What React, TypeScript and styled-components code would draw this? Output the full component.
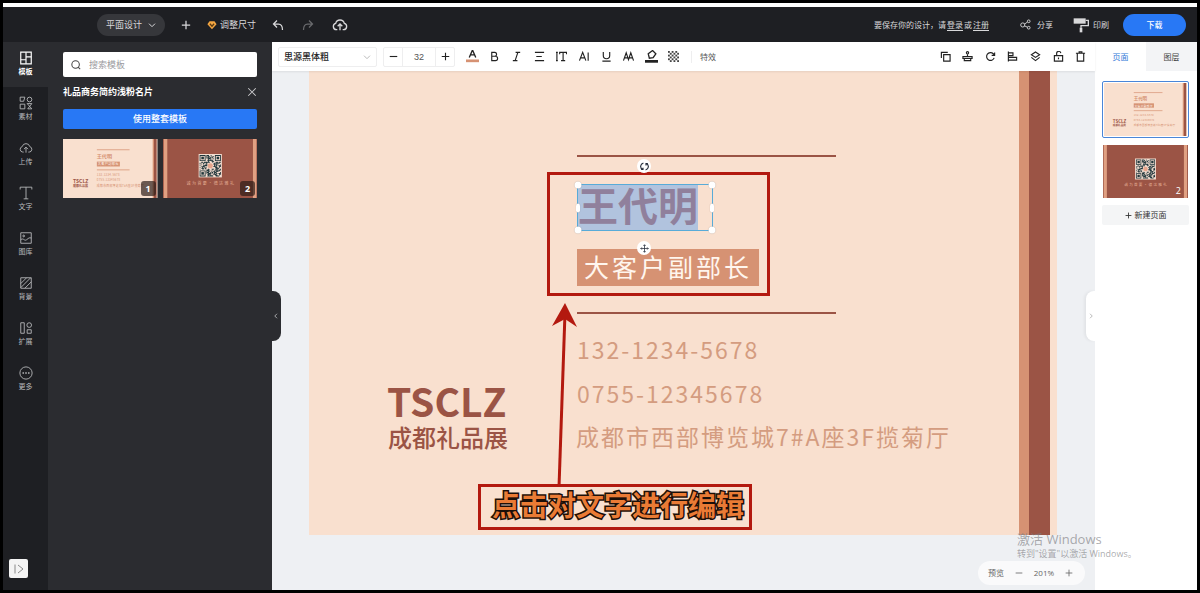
import React from "react";
import styled, { createGlobalStyle, css } from "styled-components";

const PEACH = "#f9e0cf";
const CLAY = "#d69273";
const BRICK = "#9b5445";
const MARK_RED = "#b3190f";

const GlobalStyle = createGlobalStyle`
  *, *::before, *::after { box-sizing: border-box; }
  body { margin: 0; background: #000; }
  body, button, input, select {
    font-family: "Open Sans", "Noto Sans CJK SC", sans-serif;
    font-size: 9px;
    line-height: 12px;
  }
  button, input, select { margin: 0; padding: 0; border: 0; background: none; color: inherit; }
  button { cursor: pointer; }
  svg { display: block; flex: none; }
`;

/* ---------- icons ---------- */

type IconProps = { size?: number; stroke?: number; children: React.ReactNode };

const Icon = ({ size = 12, stroke = 2, children }: IconProps) => (
  <svg
    width={size}
    height={size}
    viewBox="0 0 24 24"
    fill="none"
    stroke="currentColor"
    strokeWidth={stroke}
    aria-hidden="true"
  >
    {children}
  </svg>
);

const cloudUp = (
  <>
    <path d="M8 19H6.500A4.800 4.800 0 0 1 5.500 9.600A6.700 6.700 0 0 1 18.500 9.600A4.800 4.800 0 0 1 17.500 19H16" />
    <path d="M12 20V11M8.500 14L12 10.500L15.500 14" />
  </>
);

const icons = {
  plus: <path d="M12 2V22M2 12H22" />,
  minus: <path d="M2 12H22" />,
  down: <path d="M3 8L12 17L21 8" />,
  left: <path d="M16 3L7 12L16 21" />,
  right: <path d="M8 3L17 12L8 21" />,
  close: <path d="M3 3L21 21M21 3L3 21" />,
  undo: <path d="M10 3L3 10L10 17M3 10H13C18 10 21 14 21 22" />,
  redo: <path d="M14 3L21 10L14 17M21 10H11C6 10 3 14 3 22" />,
  cloud: cloudUp,
  search: (
    <>
      <circle cx="11" cy="11" r="9" />
      <path d="M17 17L22 22" />
    </>
  ),
  gem: (
    <>
      <path d="M6 3H18L23 10L12 22L1 10Z" fill="#f5a742" stroke="none" />
      <path d="M7 9L12 15L17 9" stroke="#5b3a12" strokeWidth="3" />
    </>
  ),
  share: (
    <>
      <circle cx="6" cy="13" r="4.500" />
      <circle cx="19" cy="5" r="3" />
      <circle cx="19" cy="19" r="3" />
      <path d="M10 11L16.500 6.500M10 15L16.500 18" />
    </>
  ),
  roller: (
    <>
      <path d="M1 2H19V10H1Z" fill="currentColor" stroke="none" />
      <path d="M19 5H23V13H12V16" />
      <path d="M10 16H14V23H10Z" fill="currentColor" stroke="none" />
    </>
  ),
  template: (
    <>
      <path d="M3 2H21V22H3Z" />
      <path d="M12 2V22M12 10H21M3 15H12" />
    </>
  ),
  shapes: (
    <>
      <path d="M2 2H10L8 9H2Z" />
      <circle cx="18" cy="6" r="4" />
      <path d="M2 14H10V22H2Z" />
      <path d="M14 13H22L15 22H22Z" />
    </>
  ),
  type: <path d="M2 6V2H22V6M12 2V22M8 22H16" />,
  gallery: (
    <>
      <path d="M3 3H21V21H3Z" />
      <circle cx="8" cy="8.500" r="1.500" />
      <path d="M3 15C8 11 9 18 13 15S17 11 21 12" />
    </>
  ),
  hatch: (
    <>
      <path d="M3 3H21V21H3Z" />
      <path d="M3 13L13 3M3 20L20 3M10 21L21 10" />
    </>
  ),
  extend: (
    <>
      <path d="M3 3H9V21H3Z" />
      <circle cx="17.500" cy="7" r="4" />
      <path d="M14 15H21V21H14Z" />
    </>
  ),
  more: (
    <>
      <circle cx="12" cy="12" r="10.500" />
      <path d="M6 12H8.500M10.700 12H13.300M15.500 12H18" strokeWidth="2.500" />
    </>
  ),
  expand: <path d="M4 3V21M10 4L20 12L10 20" />,
  fontColor: (
    <>
      <path d="M6 14L12 0L18 14M8 9H16" />
      <path d="M-1 20H25" stroke={CLAY} strokeWidth="5" />
    </>
  ),
  bold: <path d="M6 3H13A4.300 4.300 0 0 1 13 11.500H6ZM6 11.500H14A4.700 4.700 0 0 1 14 21H6Z" />,
  italic: <path d="M10 3H20M4 21H14M15 3L9 21" />,
  align: <path d="M2 3H22M5 12H17M2 21H22" />,
  spacing: <path d="M2 3V21M0 3H4M0 21H4M8 7V3H23V7M15.500 3V21M11 21H20" />,
  letterA: <path d="M1 21L8 3L15 21M4 15H12M20 3V21" />,
  underline: <path d="M5 2V10A7 7 0 0 0 19 10V2M3 22H21" />,
  caseAA: <path d="M1 21L7 4L12 19L17 4L23 21M3 15H10M14 15H21" />,
  marker: (
    <>
      <path d="M8 15L6 7L14 1L20 7L15 14Z" />
      <path d="M0 21H24" strokeWidth="5" />
    </>
  ),
  copy: (
    <>
      <path d="M8 8H22V22H8Z" />
      <path d="M3 15V3H17" />
    </>
  ),
  stamp: (
    <>
      <circle cx="12" cy="4" r="2.500" />
      <path d="M12 7V12M2 12H22V16H2ZM5 16V21H19V16" />
    </>
  ),
  rotate: <path d="M20 15A8.500 8.500 0 1 1 18 6L21 9M21 3V9.500H14.500" />,
  alignLeft: <path d="M3 1V23M3 4H13V10H3M3 14H21V20H3" />,
  layers: <path d="M12 2L21 8L12 14L3 8ZM3 14L12 21L21 14" />,
  lock: <path d="M3 10H21V22H3ZM8 10V6A4.500 4.500 0 0 1 17 4.500M12 14V18" />,
  trash: <path d="M2 5H22M5 5V22H19V5M9 5V2H15V5" />,
  spin: (
    <path d="M9 3A9 9 0 0 0 7 20M15 21A9 9 0 0 0 17 4M3 20H8V15M21 4H16V9" />
  ),
  move: (
    <path d="M12 2V22M2 12H22M9 5L12 2L15 5M9 19L12 22L15 19M5 9L2 12L5 15M19 9L22 12L19 15" />
  ),
};

type IconName = keyof typeof icons;

const checkCells = Array.from({ length: 36 }, (_, i) => [i % 6, Math.floor(i / 6)]).filter(
  ([x, y]) => (x + y) % 2 === 0
);

const CheckerIcon = () => (
  <svg width="11" height="11" viewBox="0 0 12 12" fill="#444" aria-hidden="true">
    {checkCells.map(([x, y]) => (
      <rect key={`${x}-${y}`} x={x * 2} y={y * 2} width="2" height="2" />
    ))}
  </svg>
);

/* ---------- frame and header ---------- */

const Frame = styled.div`
  display: flex;
  min-height: 100vh;
  padding: 3px;
  background: #000;
`;

const Window = styled.div`
  flex: 1;
  min-width: 0;
  display: flex;
  flex-direction: column;
  border-top: 4px solid #fff;
`;

const Header = styled.header`
  display: flex;
  align-items: center;
  justify-content: space-between;
  height: 35px;
  padding: 0 11px 0 94px;
  background: #1e1f23;
  color: #d8d8da;
`;

const HeaderGroup = styled.div<{ $gap: number }>`
  display: flex;
  align-items: center;
  gap: ${(p) => p.$gap}px;
  white-space: nowrap;
`;

const ModePill = styled.button`
  display: flex;
  align-items: center;
  justify-content: center;
  gap: 6px;
  width: 68px;
  height: 22px;
  border-radius: 11px;
  background: #36373b;
`;

const HeaderButton = styled.button<{ $gap?: number; $dim?: boolean }>`
  display: flex;
  align-items: center;
  gap: ${(p) => p.$gap ?? 0}px;
  opacity: ${(p) => (p.$dim ? 0.4 : 1)};
  font-size: ${(p) => (p.$gap && p.$gap > 3 ? 8 : 9)}px;
`;

const SaveHint = styled.p`
  margin: 0 10px 0 0;
  font-size: 8px;
`;

const HintLink = styled.a`
  margin: 0 1px;
  color: inherit;
  text-underline-offset: 2px;
`;

const DownloadButton = styled.button`
  width: 63px;
  height: 22px;
  border-radius: 11px;
  background: #2878f5;
  color: #fff;
  font-size: 8px;
  font-weight: 500;
`;

const Body = styled.div`
  flex: 1;
  display: flex;
`;

/* ---------- left side ---------- */

const Rail = styled.nav`
  display: flex;
  flex-direction: column;
  width: 45px;
  background: #1e1f23;
`;

const RailButton = styled.button<{ $active?: boolean }>`
  display: flex;
  flex-direction: column;
  align-items: center;
  gap: 2px;
  height: 45px;
  padding-top: 9px;
  font-size: 7px;
  line-height: 10px;
  color: ${(p) => (p.$active ? "#fff" : "#b9babd")};
  font-weight: ${(p) => (p.$active ? 700 : 400)};
  background: ${(p) => (p.$active ? "#2b2c30" : "transparent")};
`;

const ExpandButton = styled.button`
  display: grid;
  place-items: center;
  width: 19px;
  height: 19px;
  margin: auto 0 12px 6px;
  border-radius: 2px;
  background: #f4f4f4;
  color: #666;
`;

const TemplatePanel = styled.aside`
  position: relative;
  z-index: 1;
  width: 224px;
  padding: 10px 15px;
  background: #2b2c30;
`;

const SearchBox = styled.label`
  display: flex;
  align-items: center;
  gap: 8px;
  height: 25px;
  padding: 0 8px;
  border-radius: 2px;
  background: #fff;
  color: #444;
`;

const SearchInput = styled.input`
  flex: 1;
  min-width: 0;
  outline: none;
  &::placeholder { color: #9a9a9e; opacity: 1; }
`;

const PanelHead = styled.div`
  display: flex;
  align-items: center;
  justify-content: space-between;
  height: 32px;
  padding-bottom: 2px;
  color: #c9c9cb;
`;

const PanelTitle = styled.h2`
  margin: 0;
  color: #fff;
  font-size: 9px;
  font-weight: 700;
`;

const ApplyButton = styled.button`
  width: 100%;
  height: 20px;
  border-radius: 2px;
  background: #2878f5;
  color: #fff;
  font-weight: 500;
`;

const TemplateGrid = styled.div`
  display: grid;
  grid-template-columns: 1fr 1fr;
  gap: 5px;
  margin-top: 10px;
`;

const TemplateThumb = styled.button`
  position: relative;
  height: 59px;
  overflow: hidden;
`;

const PageBadge = styled.span`
  position: absolute;
  right: 2px;
  bottom: 2px;
  width: 15px;
  height: 15px;
  border-radius: 3px;
  background: rgba(40, 25, 20, 0.68);
  color: #fff;
  font: 700 9px/15px "Open Sans", sans-serif;
`;

const SideHandle = styled.button<{ $side: "left" | "right" }>`
  position: absolute;
  top: 50%;
  z-index: 2;
  display: grid;
  place-items: center;
  width: 10px;
  height: 50px;
  transform: translateY(-50%);
  ${(p) =>
    p.$side === "left"
      ? css`
          left: 100%;
          margin-left: -1px;
          border-radius: 0 8px 8px 0;
          background: #2b2c30;
          color: #d0d0d2;
        `
      : css`
          right: 100%;
          margin-right: -1px;
          border-radius: 8px 0 0 8px;
          background: #fff;
          color: #777;
          box-shadow: -2px 0 3px rgba(0, 0, 0, 0.05);
        `}
`;

/* ---------- editor ---------- */

const Editor = styled.main`
  position: relative;
  flex: 1;
  min-width: 0;
  display: flex;
  flex-direction: column;
  background: #eef0f3;
`;

const Toolbar = styled.div`
  display: flex;
  align-items: center;
  height: 29px;
  padding: 0 3px 0 6px;
  background: #fff;
  box-shadow: 0 1px 2px rgba(0, 0, 0, 0.08);
  color: #222;
  z-index: 1;
`;

const FontPicker = styled.div`
  position: relative;
  width: 99px;
  height: 20px;
  border: 1px solid #eeeeef;
  border-radius: 2px;
`;

const FontSelect = styled.select`
  width: 100%;
  height: 18px;
  padding-left: 5px;
  appearance: none;
  font-weight: 500;
`;

const PickerArrow = styled.span`
  position: absolute;
  top: 5px;
  right: 5px;
  color: #999;
  pointer-events: none;
`;

const Stepper = styled.div`
  display: grid;
  grid-template-columns: 18px 34px 18px;
  height: 20px;
  margin: 0 6px 0 6px;
  border: 1px solid #eeeeef;
  border-radius: 2px;
`;

const StepButton = styled.button`
  display: grid;
  place-items: center;
`;

const SizeInput = styled.input`
  width: 34px;
  border: solid #eeeeef;
  border-width: 0 1px;
  color: #555;
  font-family: "Liberation Sans", sans-serif;
  text-align: center;
`;

const ToolStrip = styled.div<{ $count: number; $width: number }>`
  display: grid;
  grid-template-columns: repeat(${(p) => p.$count}, 1fr);
  width: ${(p) => p.$width}px;
`;

const ToolButton = styled.button`
  display: grid;
  place-items: center;
  height: 20px;
`;

const EffectButton = styled.button`
  margin: 0 auto 0 6px;
  padding-left: 8px;
  border-left: 1px solid #eeeeef;
  color: #555;
  font-size: 8px;
`;

const Workspace = styled.div`
  flex: 1;
  display: flex;
  padding: 0 38px 55px 37px;
`;

const Card = styled.section`
  position: relative;
  flex: 1;
  min-height: 464px;
  background: ${PEACH};
  font-family: "Noto Sans CJK SC", sans-serif;
`;

const Stripe = styled.div`
  position: absolute;
  top: 0;
  bottom: 0;
  right: 7px;
  width: 31px;
  border-left: 10px solid ${CLAY};
  background: ${BRICK};
`;

type Spot = { $x: number; $y: number };

const placed = css<Spot>`
  position: absolute;
  left: ${(p) => p.$x}px;
  top: ${(p) => p.$y}px;
  margin: 0;
  white-space: nowrap;
`;

const Rule = styled.div<Spot>`
  ${placed}
  width: 259px;
  height: 2px;
  background: ${BRICK};
`;

const NameBox = styled.div<Spot>`
  ${placed}
  width: 136px;
  height: 47px;
  border: 1px solid #58abd8;
`;

const NameText = styled.h1`
  display: inline-block;
  margin: 0;
  padding-bottom: 7px;
  background: #b1c3de;
  color: #90809c;
  font-size: 40px;
  line-height: 38px;
  font-weight: 700;
`;

const Handle = styled.span<Spot & { $bar?: boolean }>`
  position: absolute;
  left: ${(p) => p.$x}%;
  top: ${(p) => p.$y}%;
  width: ${(p) => (p.$bar ? 4 : 7)}px;
  height: ${(p) => (p.$bar ? 9 : 7)}px;
  border-radius: 4px;
  background: #fff;
  box-shadow: 0 0 1px rgba(0, 0, 0, 0.3);
  transform: translate(-50%, -50%);
`;

const RoundHandle = styled.button<Spot>`
  ${placed}
  display: grid;
  place-items: center;
  width: 14px;
  height: 14px;
  border-radius: 7px;
  background: #fff;
  color: #222a38;
`;

const RoleTag = styled.p<Spot>`
  ${placed}
  width: 182px;
  padding: 0 0 3px 7px;
  background: ${CLAY};
  color: #fff6ee;
  font-size: 25px;
  line-height: 34px;
  letter-spacing: 3px;
`;

const ContactLine = styled.p<Spot>`
  ${placed}
  color: #d49c80;
  font-size: 23px;
  line-height: 30px;
  letter-spacing: 2px;
`;

const Brand = styled.p<Spot>`
  ${placed}
  color: ${BRICK};
  font-size: 39px;
  line-height: 40px;
  font-weight: 700;
`;

const BrandSub = styled.p<Spot>`
  ${placed}
  color: ${BRICK};
  font-size: 24px;
  line-height: 30px;
  font-weight: 500;
`;

const MarkBox = styled.div<Spot & { $w: number; $h: number }>`
  ${placed}
  width: ${(p) => p.$w}px;
  height: ${(p) => p.$h}px;
  border: 3px solid ${MARK_RED};
  pointer-events: none;
`;

const MarkText = styled.strong`
  display: block;
  padding-left: 11px;
  color: #ea7b35;
  font-size: 28px;
  line-height: 35px;
  font-weight: 700;
  -webkit-text-stroke: 3px #1c0f08;
  paint-order: stroke fill;
`;

const Arrow = styled.svg<Spot>`
  ${placed}
  pointer-events: none;
`;

const Watermark = styled.div`
  position: absolute;
  right: -46px;
  bottom: 30px;
  z-index: 3;
  width: 124px;
  color: rgba(125, 125, 130, 0.65);
  font-size: 9px;
  line-height: 13px;
  white-space: nowrap;
  pointer-events: none;
`;

const WatermarkTitle = styled.div`
  font-size: 13px;
  line-height: 16px;
`;

const ZoomBar = styled.div`
  position: absolute;
  right: 10px;
  bottom: 5px;
  display: flex;
  align-items: center;
  justify-content: space-between;
  width: 107px;
  height: 24px;
  padding: 0 12px 0 10px;
  border-radius: 12px;
  background: #fafafb;
  color: #666;
  font-size: 8px;
`;

const ZoomButton = styled.button`
  font-size: 8px;
`;

/* ---------- right side ---------- */

const PagesPanel = styled.aside`
  position: relative;
  width: 102px;
  background: #fff;
`;

const Tabs = styled.div`
  display: grid;
  grid-template-columns: 1fr 1fr;
  height: 29px;
`;

const Tab = styled.button<{ $active?: boolean }>`
  font-size: 8px;
  background: ${(p) => (p.$active ? "#fff" : "#f3f4f6")};
  color: ${(p) => (p.$active ? "#2f78d8" : "#444")};
`;

const PageList = styled.div`
  display: flex;
  flex-direction: column;
  gap: 7px;
  padding: 10px 8px 0 7px;
`;

const PageThumb = styled.button<{ $active?: boolean }>`
  position: relative;
  height: ${(p) => (p.$active ? 57 : 53)}px;
  margin: 0 ${(p) => (p.$active ? 0 : 1)}px;
  padding: ${(p) => (p.$active ? 1 : 0)}px;
  border: ${(p) => (p.$active ? "1px solid #4a86d8" : "0")};
  border-radius: ${(p) => (p.$active ? 2 : 0)}px;
`;

const PageNumber = styled.span`
  position: absolute;
  right: 7px;
  bottom: 1px;
  color: #fff;
  font-size: 9px;
`;

const AddPage = styled.button`
  display: flex;
  align-items: center;
  justify-content: center;
  gap: 3px;
  height: 20px;
  border-radius: 2px;
  background: #f4f5f6;
  color: #333;
  font-size: 8px;
`;

/* ---------- page miniatures ---------- */

const Mini = styled.svg`
  width: 100%;
  height: 100%;
  font-family: "Noto Sans CJK SC", sans-serif;
`;

const FrontMini = () => (
  <Mini viewBox="0 0 748 464" preserveAspectRatio="none">
    <rect width="748" height="464" fill={PEACH} />
    <rect x="710" width="10" height="464" fill={CLAY} />
    <rect x="720" width="21" height="464" fill={BRICK} />
    <rect x="268" y="82" width="259" height="6" fill={CLAY} />
    <rect x="268" y="240" width="259" height="6" fill={CLAY} />
    <text x="268" y="148" fontSize="40" fontWeight="700" fill={CLAY}>王代明</text>
    <rect x="268" y="178" width="182" height="38" fill={CLAY} />
    <text x="275" y="206" fontSize="25" letterSpacing="3" fill="#fff6ee">大客户副部长</text>
    <g fontSize="23" letterSpacing="2" fill={CLAY}>
      <text x="268" y="288">132-1234-5678</text>
      <text x="268" y="332">0755-12345678</text>
      <text x="268" y="374">成都市西部博览城7#A座3F揽菊厅</text>
    </g>
    <text x="79" y="346" fontSize="40" fontWeight="700" fill={BRICK}>TSCLZ</text>
    <text x="79" y="376" fontSize="24" fontWeight="700" fill={BRICK}>成都礼品展</text>
  </Mini>
);

const QR = 25;
const isFinder = (x: number, y: number) =>
  (x < 8 && y < 8) || (x > QR - 9 && y < 8) || (x < 8 && y > QR - 9);
const qrPath = Array.from({ length: QR * QR }, (_, i) => [i % QR, Math.floor(i / QR)])
  .filter(([x, y]) => {
    const center = Math.abs(x - 12) < 4 && Math.abs(y - 12) < 4;
    return !isFinder(x, y) && !center && (x * 7 + y * 13 + x * y * 5 + ((x * x) % 7)) % 9 < 5;
  })
  .map(([x, y]) => `M${x} ${y}h1v1h-1z`)
  .join("");

const BackMini = () => (
  <Mini viewBox="0 0 748 464" preserveAspectRatio="none">
    <rect width="748" height="464" fill={BRICK} />
    <rect x="6" width="28" height="464" fill="#e0a082" />
    <rect x="712" width="28" height="464" fill="#e0a082" />
    <g transform="translate(282 118)">
      <rect width="184" height="184" fill="#f3ddd0" />
      <g transform="translate(8 8) scale(6.720)">
        <path d={qrPath} fill="#20363b" />
        {[[0, 0], [18, 0], [0, 18]].map(([x, y]) => (
          <g key={`${x}-${y}`} fill="#20363b">
            <path fillRule="evenodd" d={`M${x} ${y}h7v7h-7zM${x + 1} ${y + 1}v5h5v-5z`} />
            <rect x={x + 2} y={y + 2} width="3" height="3" />
          </g>
        ))}
        <circle cx="12.500" cy="12.500" r="3" fill="#e7a58c" />
      </g>
    </g>
    <text x="380" y="363" fontSize="32" letterSpacing="11" textAnchor="middle" fill="#e3ad94">
      诚为首要·德达雅礼
    </text>
  </Mini>
);

/* ---------- data ---------- */

const railItems: { icon: IconName; label: string }[] = [
  { icon: "template", label: "模板" },
  { icon: "shapes", label: "素材" },
  { icon: "cloud", label: "上传" },
  { icon: "type", label: "文字" },
  { icon: "gallery", label: "图库" },
  { icon: "hatch", label: "背景" },
  { icon: "extend", label: "扩展" },
  { icon: "more", label: "更多" },
];

const textTools: { icon: IconName; label: string }[] = [
  { icon: "fontColor", label: "文字颜色" },
  { icon: "bold", label: "加粗" },
  { icon: "italic", label: "斜体" },
  { icon: "align", label: "对齐" },
  { icon: "spacing", label: "间距" },
  { icon: "letterA", label: "竖排" },
  { icon: "underline", label: "下划线" },
  { icon: "caseAA", label: "大小写" },
  { icon: "marker", label: "高亮" },
];

const objectTools: { icon: IconName; label: string }[] = [
  { icon: "copy", label: "复制" },
  { icon: "stamp", label: "格式刷" },
  { icon: "rotate", label: "旋转" },
  { icon: "alignLeft", label: "排列" },
  { icon: "layers", label: "图层" },
  { icon: "lock", label: "锁定" },
  { icon: "trash", label: "删除" },
];

const wideTools: IconName[] = ["fontColor", "marker"];

const corners = [[0, 0], [100, 0], [0, 100], [100, 100]];

/* ---------- page ---------- */

const DesignCard = () => (
  <Card>
    <Stripe />
    <Rule $x={268} $y={84} />
    <Rule $x={268} $y={241} />
    <RoleTag $x={268} $y={178}>大客户副部长</RoleTag>
    <ContactLine $x={268} $y={263}>132-1234-5678</ContactLine>
    <ContactLine $x={268} $y={307}>0755-12345678</ContactLine>
    <ContactLine $x={267} $y={350}>成都市西部博览城7#A座3F揽菊厅</ContactLine>
    <Brand $x={78} $y={309}>TSCLZ</Brand>
    <BrandSub $x={79} $y={351}>成都礼品展</BrandSub>
    <MarkBox $x={238} $y={101} $w={223} $h={124} />
    <NameBox $x={268} $y={113}>
      <NameText>王代明</NameText>
      {corners.map(([x, y]) => (
        <Handle key={`${x}-${y}`} $x={x} $y={y} />
      ))}
      <Handle $x={0} $y={50} $bar />
      <Handle $x={100} $y={50} $bar />
    </NameBox>
    <RoundHandle $x={328} $y={88} aria-label="旋转">
      <Icon size={9} stroke={3}>{icons.spin}</Icon>
    </RoundHandle>
    <RoundHandle $x={328} $y={170} aria-label="移动">
      <Icon size={9}>{icons.move}</Icon>
    </RoundHandle>
    <MarkBox $x={169} $y={413} $w={274} $h={46}>
      <MarkText>点击对文字进行编辑</MarkText>
    </MarkBox>
    <Arrow $x={240} $y={230} width="32" height="186" viewBox="0 0 32 186" aria-hidden="true">
      <path d="M16 12L10 186" stroke={MARK_RED} strokeWidth="3" />
      <path d="M16 2L28 26L16 18L3 25Z" fill={MARK_RED} />
    </Arrow>
  </Card>
);

export default function App() {
  return (
    <Frame>
      <GlobalStyle />
      <Window>
        <Header>
          <HeaderGroup $gap={16}>
            <ModePill>
              平面设计
              <Icon size={8} stroke={3}>{icons.down}</Icon>
            </ModePill>
            <HeaderButton aria-label="新建">
              <Icon size={10} stroke={3}>{icons.plus}</Icon>
            </HeaderButton>
            <HeaderButton $gap={3}>
              <Icon size={10}>{icons.gem}</Icon>
              调整尺寸
            </HeaderButton>
            <HeaderGroup $gap={18}>
              <HeaderButton aria-label="撤销">
                <Icon size={12} stroke={2.5}>{icons.undo}</Icon>
              </HeaderButton>
              <HeaderButton aria-label="重做" $dim>
                <Icon size={12} stroke={2.5}>{icons.redo}</Icon>
              </HeaderButton>
              <HeaderButton aria-label="保存到云端">
                <Icon size={16}>{icons.cloud}</Icon>
              </HeaderButton>
            </HeaderGroup>
          </HeaderGroup>
          <HeaderGroup $gap={20}>
            <SaveHint>
              要保存你的设计，请
              <HintLink href="#login">登录</HintLink>或<HintLink href="#register">注册</HintLink>
            </SaveHint>
            <HeaderButton $gap={6}>
              <Icon size={11}>{icons.share}</Icon>
              分享
            </HeaderButton>
            <HeaderGroup $gap={14}>
              <HeaderButton $gap={4}>
                <Icon size={16}>{icons.roller}</Icon>
                印刷
              </HeaderButton>
              <DownloadButton>下载</DownloadButton>
            </HeaderGroup>
          </HeaderGroup>
        </Header>
        <Body>
          <Rail>
            {railItems.map((item, i) => (
              <RailButton key={item.label} $active={i === 0}>
                <Icon size={14} stroke={i === 0 ? 2 : 1.5}>{icons[item.icon]}</Icon>
                {item.label}
              </RailButton>
            ))}
            <ExpandButton aria-label="展开">
              <Icon size={12} stroke={1.5}>{icons.expand}</Icon>
            </ExpandButton>
          </Rail>
          <TemplatePanel>
            <SearchBox>
              <Icon size={10} stroke={2.5}>{icons.search}</Icon>
              <SearchInput placeholder="搜索模板" aria-label="搜索模板" />
            </SearchBox>
            <PanelHead>
              <PanelTitle>礼品商务简约浅粉名片</PanelTitle>
              <HeaderButton aria-label="关闭">
                <Icon size={10} stroke={2.5}>{icons.close}</Icon>
              </HeaderButton>
            </PanelHead>
            <ApplyButton>使用整套模板</ApplyButton>
            <TemplateGrid>
              <TemplateThumb>
                <FrontMini />
                <PageBadge>1</PageBadge>
              </TemplateThumb>
              <TemplateThumb>
                <BackMini />
                <PageBadge>2</PageBadge>
              </TemplateThumb>
            </TemplateGrid>
            <SideHandle $side="left" aria-label="收起">
              <Icon size={6} stroke={3}>{icons.left}</Icon>
            </SideHandle>
          </TemplatePanel>
          <Editor>
            <Toolbar>
              <FontPicker>
                <FontSelect aria-label="字体" defaultValue="bold">
                  <option value="bold">思源黑体粗</option>
                </FontSelect>
                <PickerArrow>
                  <Icon size={8}>{icons.down}</Icon>
                </PickerArrow>
              </FontPicker>
              <Stepper>
                <StepButton aria-label="减小字号">
                  <Icon size={9} stroke={3}>{icons.minus}</Icon>
                </StepButton>
                <SizeInput aria-label="字号" defaultValue="32" />
                <StepButton aria-label="增大字号">
                  <Icon size={9} stroke={3}>{icons.plus}</Icon>
                </StepButton>
              </Stepper>
              <ToolStrip $count={10} $width={224}>
                {textTools.map((tool) => (
                  <ToolButton key={tool.icon} aria-label={tool.label}>
                    <Icon size={wideTools.includes(tool.icon) ? 13 : 11} stroke={2.5}>
                      {icons[tool.icon]}
                    </Icon>
                  </ToolButton>
                ))}
                <ToolButton aria-label="透明度">
                  <CheckerIcon />
                </ToolButton>
              </ToolStrip>
              <EffectButton>特效</EffectButton>
              <ToolStrip $count={7} $width={158}>
                {objectTools.map((tool) => (
                  <ToolButton key={tool.icon} aria-label={tool.label}>
                    <Icon size={11} stroke={2.5}>{icons[tool.icon]}</Icon>
                  </ToolButton>
                ))}
              </ToolStrip>
            </Toolbar>
            <Workspace>
              <DesignCard />
            </Workspace>
            <ZoomBar>
              <ZoomButton>预览</ZoomButton>
              <ZoomButton aria-label="缩小">
                <Icon size={8} stroke={2.5}>{icons.minus}</Icon>
              </ZoomButton>
              <span>201%</span>
              <ZoomButton aria-label="放大">
                <Icon size={8} stroke={2.5}>{icons.plus}</Icon>
              </ZoomButton>
            </ZoomBar>
            <Watermark>
              <WatermarkTitle>激活 Windows</WatermarkTitle>
              转到"设置"以激活 Windows。
            </Watermark>
          </Editor>
          <PagesPanel>
            <Tabs>
              <Tab $active>页面</Tab>
              <Tab>图层</Tab>
            </Tabs>
            <PageList>
              <PageThumb $active aria-label="第 1 页">
                <FrontMini />
              </PageThumb>
              <PageThumb aria-label="第 2 页">
                <BackMini />
                <PageNumber>2</PageNumber>
              </PageThumb>
              <AddPage>
                <Icon size={7} stroke={3}>{icons.plus}</Icon>
                新建页面
              </AddPage>
            </PageList>
            <SideHandle $side="right" aria-label="收起页面栏">
              <Icon size={6} stroke={2}>{icons.right}</Icon>
            </SideHandle>
          </PagesPanel>
        </Body>
      </Window>
    </Frame>
  );
}
